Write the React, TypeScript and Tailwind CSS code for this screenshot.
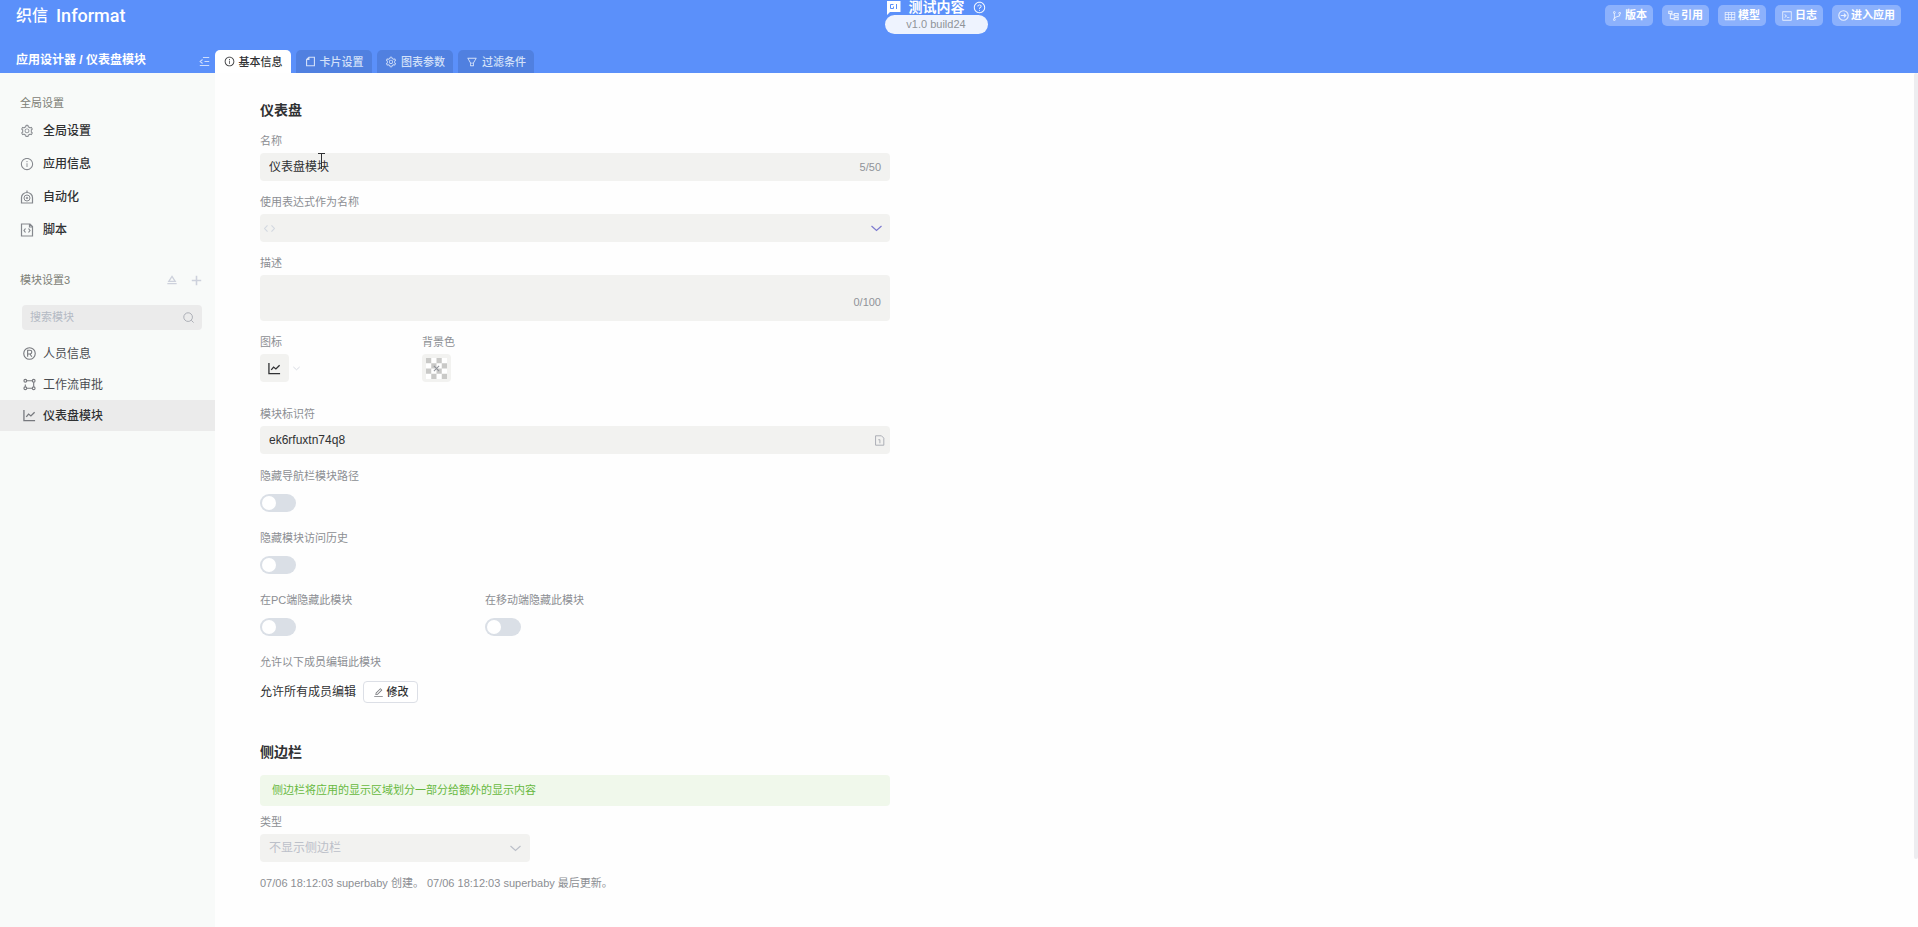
import { useState } from "react";
import type { ReactNode } from "react";
import {
  AiOutlineBranches,
  AiOutlineCode,
  AiOutlineEdit,
  AiOutlineFilter,
  AiOutlineInfoCircle,
  AiOutlineQuestionCircle,
  AiOutlineSetting,
  AiOutlineTable,
} from "react-icons/ai";

const stroke = { fill: "none", stroke: "currentColor", viewBox: "0 0 14 14" };

const MessageIcon = () => (
  <svg viewBox="0 0 14 14" className="size-[14px]">
    <path fill="currentColor" d="M0 0h13.500v11H3L0 14z" />
    <path fill="none" stroke="#5b90fa" d="M6.500 3.500h-3v4h3v-2M9.500 3v5" />
  </svg>
);

const FoldIcon = () => (
  <svg {...stroke} className="size-[11px]">
    <path strokeWidth="1.400" d="M5 2h8M7 7h6M1 12h12M4.500 4.500L1.500 7l3 2.500" />
  </svg>
);

const CardIcon = () => (
  <svg {...stroke} className="size-[11px]">
    <path strokeWidth="1.400" d="M5 1.500h7v11H2V4.500zM5 1.500v3H2" />
  </svg>
);

const TreeIcon = () => (
  <svg {...stroke} className="size-[11px]">
    <path strokeWidth="1.400" d="M1 1.500h4v3H1zM8 4.500h5v3H8zM8 9.500h5v3H8zM3 4.500V11h5M3 6h5" />
  </svg>
);

const EnterIcon = () => (
  <svg {...stroke} className="size-[11px]">
    <circle cx="7" cy="7" r="6" strokeWidth="1.400" />
    <path strokeWidth="1.400" d="M3.500 7h6.500M7.500 4.500L10 7 7.500 9.500" />
  </svg>
);

const RobotIcon = () => (
  <svg {...stroke} className="size-[14px]">
    <path strokeWidth="1.200" d="M1.500 13V7.500a5.500 5 0 0 1 11 0V13zM7 2.500V0.500" />
    <circle cx="7" cy="8" r="3" />
    <circle cx="7" cy="8" r="0.800" />
  </svg>
);

const ScriptIcon = () => (
  <svg {...stroke} className="size-[14px]">
    <path
      strokeWidth="1.200"
      d="M1.500 1h8.500l2.500 2.500V13H1.500zM9.500 1v3h3M5.500 5.500L4 7.500l1.500 2M8.500 5.500L10 7.500l-1.500 2"
    />
  </svg>
);

const RegisteredIcon = () => (
  <svg {...stroke} className="size-[13px]">
    <circle cx="7" cy="7" r="6.200" strokeWidth="1.200" />
    <path strokeWidth="1.200" d="M5 10.500v-7h2.500a1.800 1.800 0 0 1 0 4H5M7.500 7.500l2 3" />
  </svg>
);

const FlowIcon = () => (
  <svg {...stroke} strokeWidth="1.200" className="size-[13px]">
    <circle cx="2.500" cy="3" r="1.500" />
    <circle cx="11.500" cy="3" r="1.500" />
    <circle cx="2.500" cy="11" r="1.500" />
    <circle cx="11.500" cy="11" r="1.500" />
    <path d="M4 3h6M11.500 4.500v5M4 11h6M2.500 9.500V7" />
  </svg>
);

const ChartIcon = () => (
  <svg {...stroke} className="size-[13px]">
    <path strokeWidth="1.400" d="M1 1v11.500h12M3.500 8.500L6 5.500l2.500 2L12.500 3.500" />
  </svg>
);

const PublishIcon = () => (
  <svg {...stroke} className="size-[10px]">
    <path strokeWidth="1.800" d="M7 2l4.500 7h-9zM0.500 12h13" />
  </svg>
);

const PlusIcon = () => (
  <svg {...stroke} className="size-[11px]">
    <path strokeWidth="2" d="M7 1v12M1 7h12" />
  </svg>
);

const SearchIcon = () => (
  <svg {...stroke} className="size-[11px] shrink-0">
    <circle cx="6.500" cy="6.500" r="5.500" strokeWidth="1.200" />
    <path strokeWidth="1.200" d="M10.500 10.500l3 3" />
  </svg>
);

const CopyIcon = () => (
  <svg {...stroke} className="size-[11px]">
    <path strokeWidth="1.200" d="M2 1h7.500L12.500 4v9H2zM5.500 6h2v4.500" />
  </svg>
);

const DownIcon = ({ className }: { className: string }) => (
  <svg viewBox="0 0 11 11" className={className}>
    <path fill="none" stroke="currentColor" strokeWidth="1.200" d="M0.500 3l5 4.500 5-4.500" />
  </svg>
);

const tabs = [
  { name: "基本信息", icon: <AiOutlineInfoCircle size={11} /> },
  { name: "卡片设置", icon: <CardIcon /> },
  { name: "图表参数", icon: <AiOutlineSetting size={12} /> },
  { name: "过滤条件", icon: <AiOutlineFilter size={12} /> },
];

const actions = [
  { name: "版本", icon: <AiOutlineBranches size={12} /> },
  { name: "引用", icon: <TreeIcon /> },
  { name: "模型", icon: <AiOutlineTable size={12} /> },
  { name: "日志", icon: <AiOutlineCode size={12} /> },
  { name: "进入应用", icon: <EnterIcon /> },
];

const settings = [
  { name: "全局设置", icon: <AiOutlineSetting size={14} /> },
  { name: "应用信息", icon: <AiOutlineInfoCircle size={14} /> },
  { name: "自动化", icon: <RobotIcon /> },
  { name: "脚本", icon: <ScriptIcon /> },
];

const modules = [
  { name: "人员信息", icon: <RegisteredIcon /> },
  { name: "工作流审批", icon: <FlowIcon /> },
  { name: "仪表盘模块", icon: <ChartIcon /> },
];

function Header() {
  const [active, setActive] = useState("基本信息");

  return (
    <header className="bg-[#5b90fa] text-white">
      <div className="grid h-[50px] grid-cols-[1fr_auto_1fr] items-start">
        <a href="#home" className="flex items-center gap-2 pt-[3px] pl-4 text-[16px] leading-[26px] font-medium">
          织信
          <span className="font-['Roboto',sans-serif] text-[18px] font-medium">Informat</span>
        </a>
        <div className="flex flex-col items-center pr-[46px]">
          <div className="flex h-[15px] items-center gap-2">
            <MessageIcon />
            <h1 className="text-[14px] leading-[15px] font-bold">测试内容</h1>
            <AiOutlineQuestionCircle size={13} />
          </div>
          <span className="h-[19px] w-[103px] rounded-full bg-[#eef3fe] text-center text-[11px] leading-[19px] text-[#909399]">
            v1.0 build24
          </span>
        </div>
        <div className="flex justify-end gap-[9px] pt-[5px] pr-[17px]">
          {actions.map((action) => (
            <button
              key={action.name}
              className="flex h-[21px] items-center gap-[2px] rounded-[5px] bg-[#8cb1fc] px-[6px] text-[11px] font-bold"
            >
              <span className="opacity-80">{action.icon}</span>
              {action.name}
            </button>
          ))}
        </div>
      </div>

      <div className="flex h-[23px]">
        <div className="flex w-[215px] items-center justify-between pr-[5px] pl-4">
          <span className="pb-[3px] text-[12px] leading-[20px] font-bold">应用设计器 / 仪表盘模块</span>
          <button aria-label="收起" className="opacity-70">
            <FoldIcon />
          </button>
        </div>
        <nav className="flex gap-[5px]">
          {tabs.map((tab) => (
            <button
              key={tab.name}
              onClick={() => setActive(tab.name)}
              className={`flex h-[23px] w-[76px] items-center justify-center gap-1 rounded-t-[5px] text-[11px] font-medium ${
                active === tab.name ? "bg-white text-[#303133]" : "bg-[#5080e0] text-[#d3e0f9]"
              }`}
            >
              {tab.icon}
              <span className="pt-[2px]">{tab.name}</span>
            </button>
          ))}
        </nav>
      </div>
    </header>
  );
}

function Sidebar() {
  return (
    <aside className="w-[215px] shrink-0 bg-[#f8faf9] pt-[21px]">
      <h2 className="pl-5 text-[11px] leading-[18px] text-[#7d8076]">全局设置</h2>
      <ul className="pt-[2px]">
        {settings.map((item) => (
          <li key={item.name}>
            <a
              href="#settings"
              className="flex h-[33px] items-center gap-[9px] pl-5 text-[12px] font-medium text-[#303133]"
            >
              <span className="text-[#85888e]">{item.icon}</span>
              {item.name}
            </a>
          </li>
        ))}
      </ul>

      <div className="mt-[25px] flex h-[18px] items-center justify-between pr-[13px] pl-5 text-[11px] text-[#7d8076]">
        <h2>模块设置3</h2>
        <div className="flex items-center gap-[14px] text-[#cdd1dc]">
          <button aria-label="发布">
            <PublishIcon />
          </button>
          <button aria-label="新增模块">
            <PlusIcon />
          </button>
        </div>
      </div>

      <label className="mt-4 mr-[13px] ml-[22px] flex h-[25px] items-center rounded-[4px] bg-[#ebebeb] px-2 text-[#a8abb2]">
        <input
          placeholder="搜索模块"
          aria-label="搜索模块"
          className="w-full min-w-0 bg-transparent text-[11px] outline-none placeholder:text-[#b4bac4]"
        />
        <SearchIcon />
      </label>

      <ul className="pt-2">
        {modules.map((item) => (
          <li key={item.name}>
            <a
              href="#module"
              className={`flex h-[31px] items-center gap-[7px] pl-[23px] text-[12px] ${
                item.name === "仪表盘模块" ? "bg-[#ebebeb] font-medium text-[#303133]" : "text-[#4a4c50]"
              }`}
            >
              <span className="text-[#77797e]">{item.icon}</span>
              {item.name}
            </a>
          </li>
        ))}
      </ul>
    </aside>
  );
}

const labelClass = "block text-[11px] leading-[24px] text-[#8c8e93]";
const boxClass = "flex items-center rounded-[4px] bg-[#f2f2f0]";

function Field({ label, id, children }: { label: string; id: string; children: ReactNode }) {
  return (
    <div>
      <label htmlFor={id} className={labelClass}>
        {label}
      </label>
      {children}
    </div>
  );
}

function Switch({ label, id }: { label: string; id: string }) {
  return (
    <div className="w-[225px] pb-[14px]">
      <label htmlFor={id} className={labelClass}>
        {label}
      </label>
      <input
        type="checkbox"
        role="switch"
        id={id}
        className="mt-[6px] flex h-[18px] w-9 appearance-none items-center rounded-full bg-[#dadfe6] px-[2px] before:size-[14px] before:rounded-full before:bg-white checked:justify-end checked:bg-[#5b90fa]"
      />
    </div>
  );
}

function BasicInfo() {
  const [name, setName] = useState("仪表盘模块");
  const [description, setDescription] = useState("");

  return (
    <main className="grow bg-[#fefefe] pt-[25px] pl-[45px]">
      <div className="w-[630px]">
        <h2 className="text-[14px] leading-[24px] font-bold text-[#303133]">仪表盘</h2>

        <div className="flex flex-col gap-[9px] pt-[7px]">
          <Field label="名称" id="name">
            <div className={`${boxClass} relative h-7 px-[9px]`}>
              <input
                id="name"
                value={name}
                maxLength={50}
                onChange={(e) => setName(e.target.value)}
                className="grow bg-transparent text-[12px] text-[#303133] outline-none"
              />
              <span className="text-[11px] text-[#909399]">{name.length}/50</span>
              {/* text cursor */}
              <svg viewBox="0 0 7 17" className="absolute top-0 left-[58px] h-[17px] w-[7px]">
                <path fill="none" stroke="#303133" d="M0 0.500h7M3.500 1v15" />
              </svg>
            </div>
          </Field>

          <Field label="使用表达式作为名称" id="expression">
            <button id="expression" className={`${boxClass} h-7 w-full justify-between pr-2 pl-1`}>
              <svg {...stroke} className="size-[11px] text-[#d3d8e0]">
                <path strokeWidth="1.400" d="M4.500 3L0.800 7l3.700 4M9.500 3l3.700 4-3.700 4" />
              </svg>
              <DownIcon className="size-[11px] text-[#7d7bd0]" />
            </button>
          </Field>

          <Field label="描述" id="description">
            <div className={`${boxClass} h-[46px] px-[9px]`}>
              <textarea
                id="description"
                value={description}
                maxLength={100}
                onChange={(e) => setDescription(e.target.value)}
                className="h-9 grow resize-none bg-transparent text-[12px] text-[#303133] outline-none"
              />
              <span className="pt-2 text-[11px] text-[#909399]">{description.length}/100</span>
            </div>
          </Field>

          <div className="flex pb-[11px]">
            <div className="w-[162px]">
              <Field label="图标" id="icon">
                <div className="flex items-center gap-1">
                  <button id="icon" className={`${boxClass} h-7 w-[29px] justify-center text-[#303133]`}>
                    <ChartIcon />
                  </button>
                  <DownIcon className="size-[7px] text-[#cdd1dc]" />
                </div>
              </Field>
            </div>
            <Field label="背景色" id="background">
              <button id="background" className={`${boxClass} h-7 w-[29px] justify-center`}>
                <svg viewBox="0 0 20 20" className="size-[21px]">
                  <path fill="#fff" d="M0 0h20v20H0z" />
                  <path
                    fill="#c9c9c7"
                    d="M0 0h5v5H0zM10 0h5v5h-5zM5 5h5v5H5zM15 5h5v5h-5zM0 10h5v5H0zM10 10h5v5h-5zM5 15h5v5H5zM15 15h5v5h-5z"
                  />
                  <path stroke="#909399" d="M7.500 7.500l5 5M12.500 7.500l-5 5" />
                </svg>
              </button>
            </Field>
          </div>

          <Field label="模块标识符" id="key">
            <div className={`${boxClass} h-7 px-[9px] text-[#a8abb2]`}>
              <input
                id="key"
                defaultValue="ek6rfuxtn74q8"
                className="grow bg-transparent text-[12px] text-[#303133] outline-none"
              />
              <button aria-label="复制" className="-mr-1">
                <CopyIcon />
              </button>
            </div>
          </Field>
        </div>

        <div className="pt-[10px]">
          <Switch label="隐藏导航栏模块路径" id="hide-path" />
          <Switch label="隐藏模块访问历史" id="hide-history" />
          <div className="flex">
            <Switch label="在PC端隐藏此模块" id="hide-pc" />
            <Switch label="在移动端隐藏此模块" id="hide-mobile" />
          </div>
        </div>

        <p className={labelClass}>允许以下成员编辑此模块</p>
        <div className="flex items-center gap-[7px] pt-[7px] text-[12px] text-[#303133]">
          允许所有成员编辑
          <button className="flex h-[22px] w-[55px] items-center justify-center gap-[3px] rounded-[4px] border border-[#dcdfe6] bg-white text-[11px] font-medium">
            <AiOutlineEdit size={11} className="text-[#77797e]" />
            修改
          </button>
        </div>

        <h2 className="pt-[37px] text-[14px] leading-[24px] font-bold text-[#303133]">侧边栏</h2>
        <p className="mt-[11px] rounded-[4px] bg-[#f0f8eb] px-3 text-[11px] leading-[31px] text-[#67b93e]">
          侧边栏将应用的显示区域划分一部分给额外的显示内容
        </p>

        <div className="pt-1">
          <Field label="类型" id="type">
            <div className={`${boxClass} h-7 w-[270px] pr-[9px] text-[#bcc0c9]`}>
              <select id="type" disabled className="grow appearance-none bg-transparent pl-[9px] text-[12px] opacity-100">
                <option>不显示侧边栏</option>
              </select>
              <DownIcon className="size-[11px]" />
            </div>
          </Field>
        </div>
        <p className="pt-[9px] pb-8 text-[11px] leading-[24px] text-[#8c8e93]">
          07/06 18:12:03 superbaby 创建。 07/06 18:12:03 superbaby 最后更新。
        </p>
      </div>
    </main>
  );
}

export default function App() {
  return (
    <div className="flex min-h-screen flex-col font-['Liberation_Sans','Noto_Sans_CJK_SC',sans-serif]">
      <Header />
      <div className="flex grow">
        <Sidebar />
        <BasicInfo />
        {/* scrollbar */}
        <div className="flex w-1 flex-col bg-[#fefefe] pb-[68px]">
          <div className="grow rounded-[2px] bg-[#ededf0]" />
        </div>
      </div>
    </div>
  );
}
